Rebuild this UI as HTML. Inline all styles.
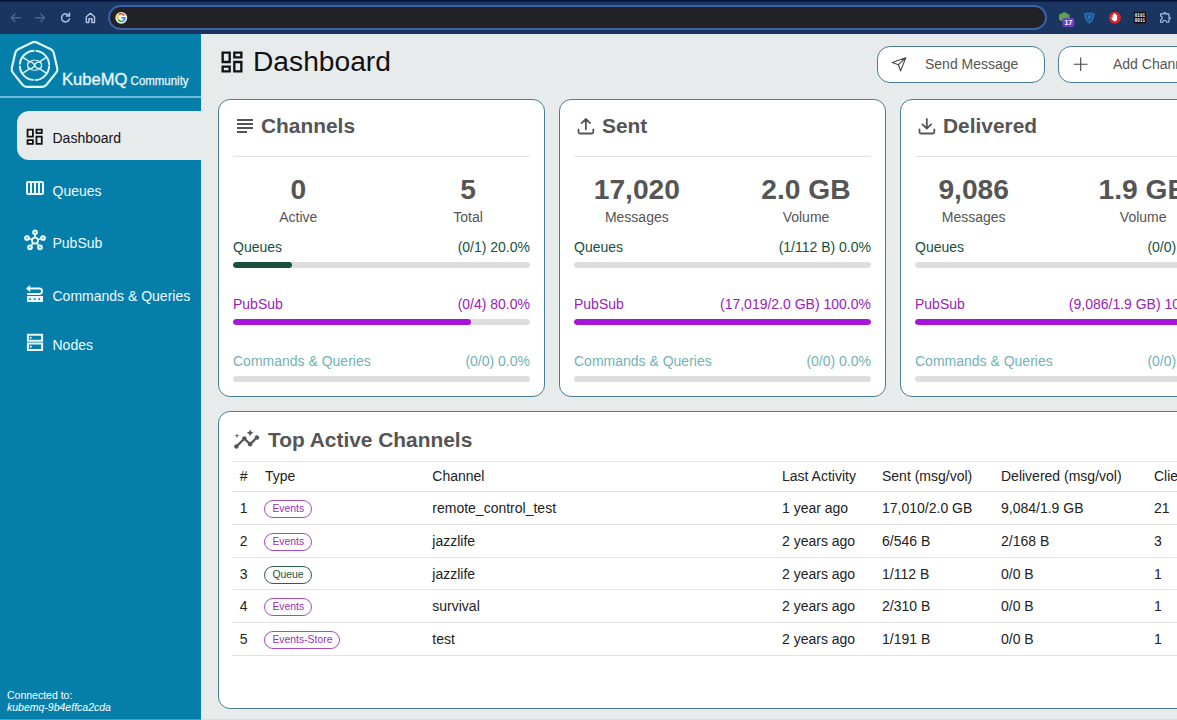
<!DOCTYPE html>
<html lang="en">
<head>
<meta charset="utf-8">
<title>KubeMQ Dashboard</title>
<style>
*{box-sizing:border-box;margin:0;padding:0}
html,body{width:1177px;height:720px;overflow:hidden;background:#e8ebec;font-family:"Liberation Sans",Arial,sans-serif;color:#222}
.abs{position:absolute}
svg{position:absolute;overflow:visible}
#chrome{position:absolute;left:0;top:0;width:1177px;height:34px;background:#1a3560}
#chrome .topline{position:absolute;left:0;top:0;width:1177px;height:3px;background:linear-gradient(#04143a 0,#04143a 1px,#1a3560 2.400px)}
#url{position:absolute;left:108px;top:5px;width:939px;height:25px;border-radius:13px;background:#202226;border:2px solid #3b61a8}
#side{position:absolute;left:0;top:34px;width:201px;height:686px;background:#057faa}
#side .sep{position:absolute;left:0;top:62px;width:201px;height:2px;background:#6bbad6}
.nav{position:absolute;left:17px;width:184px;height:49px;color:#eefaff;font-size:14px}
.nav span{position:absolute;left:35.500px;top:18px;line-height:18px;white-space:nowrap}
.nav.act{background:#e8ebec;border-radius:12px 0 0 12px;color:#111}
#main{position:absolute;left:201px;top:34px;width:976px;height:686px;background:#e8ebec;overflow:hidden}
.card{position:absolute;background:#fff;border:1px solid #4b7d92;border-radius:12px}
.ctitle{position:absolute;left:42px;top:13px;font-size:20.9px;font-weight:bold;color:#555;line-height:26px;white-space:nowrap}
.hr{position:absolute;left:14px;width:297px;top:56px;height:1px;background:#e2e2e2}
.big{position:absolute;width:160px;text-align:center;top:72px;font-size:28.2px;font-weight:bold;color:#555;line-height:34px;white-space:nowrap}
.sub{position:absolute;width:160px;text-align:center;top:108px;font-size:14px;color:#555;line-height:18px}
.row{position:absolute;left:14px;width:297px;height:18px;font-size:14px;line-height:18px;white-space:nowrap}
.row b{font-weight:normal;position:absolute;right:0;top:0}
.bar{position:absolute;left:14px;width:297px;height:6px;border-radius:3px;background:#dddddd;overflow:hidden}
.bar i{position:absolute;left:0;top:0;height:6px;border-radius:3px}
.q{color:#17513d}.p{color:#9a22b5}.c{color:#72b2b6}
.btn{position:absolute;top:11.600px;height:37.900px;border:1px solid #4b7d92;border-radius:13px;background:#fff;color:#555;font-size:14px}
.btn span{position:absolute;top:8px;line-height:18px;white-space:nowrap}
.trow{position:absolute;left:13px;width:1000px;height:33px;border-top:1px solid #e2e2e2;font-size:14px;color:#222}
.trow span{position:absolute;top:7px;line-height:18px;white-space:nowrap}
.pill{position:absolute;top:8px;height:18px;border-radius:9px;border:1px solid #a64cc0;color:#9632b0;font-size:10.400px;line-height:16px;padding:0 7px;white-space:nowrap}
.pill.g{border-color:#2d5f4e;color:#1b5440}
</style>
</head>
<body>
<div id="chrome"><div class="topline"></div><div id="url"></div>
<svg width="1177" height="34" viewBox="0 0 1177 34" style="left:0;top:0">
  <g fill="none" stroke="#4d6592" stroke-width="1.4" stroke-linecap="round" stroke-linejoin="round">
    <path d="M20.500 17.800H11.200M15 14l-3.800 3.800 3.800 3.800"/>
    <path d="M35.300 17.800h9.300M40.800 14l3.800 3.800-3.800 3.800"/>
  </g>
  <g fill="none" stroke="#aebfe2" stroke-width="1.5" stroke-linecap="round" stroke-linejoin="round">
    <path d="M69 15.800a4 4 0 1 0 .4 3.200"/>
    <path d="M69.500 13v3.100h-3.100" />
    <path d="M86.3 22.4v-5.6l4.1-3.6 4.1 3.6v5.6h-2.6v-3.6h-3v3.6z"/>
  </g>
  <circle cx="121.3" cy="17.8" r="5.9" fill="#fff"/>
  <g fill="none" stroke-width="1.7">
    <path d="M124.4 15.6a3.6 3.6 0 0 0-5.6-1" stroke="#ea4335"/>
    <path d="M118.8 14.6a3.6 3.6 0 0 0-.6 4.9" stroke="#fbbc05"/>
    <path d="M118.2 19.5a3.6 3.6 0 0 0 5.3 1.2" stroke="#34a853"/>
    <path d="M123.5 20.7a3.6 3.6 0 0 0 1.4-2.9h-3.4" stroke="#4285f4"/>
  </g>
  <path d="M1064.3 11.9l5.3 2.8v5l-5.3 2.6-5.3-2.6v-5z" fill="#5fa052"/>
  <rect x="1062.400" y="17.700" width="12" height="9.200" rx="3.200" fill="#6a3fc2"/>
  <text x="1068.400" y="24.900" font-size="7" font-weight="bold" fill="#fff" text-anchor="middle" font-family="Liberation Sans, sans-serif">17</text>
  <path d="M1084 13.400q5.300-2 10.700 0q-.4 7-5.350 10.400q-4.950-3.400-5.350-10.400z" fill="#2570b6"/><path d="M1085.800 14.600q3.500-1.200 7.100 0q-.4 4.800-3.550 7.300q-3.150-2.500-3.550-7.300z" fill="#1d4f88"/>
  <path d="M1087.500 15.400h3.700l-1.850 5.400z" fill="#2b7cc4"/>
  <circle cx="1114.9" cy="17.8" r="6" fill="#e0242b"/>
  <path d="M1112.6 17.2v-2.4q.6-.6 1.1 0v-1.2q.6-.6 1.2 0v.5q.6-.5 1.1 0v1q.6-.4 1.1 0v3.6q0 2.6-2.3 2.6q-1.6 0-2.5-1.6l-1.2-2.2q.6-.8 1.5.3z" fill="#fff"/>
  <rect x="1133.9" y="11.9" width="12" height="11.4" fill="#0b0b0b"/>
  <text x="1139.9" y="17.1" font-size="4.6" font-weight="bold" fill="#fff" text-anchor="middle" font-family="Liberation Mono, monospace" textLength="10.4" lengthAdjust="spacingAndGlyphs">0101</text>
  <text x="1139.9" y="22.1" font-size="4.6" font-weight="bold" fill="#fff" text-anchor="middle" font-family="Liberation Mono, monospace" textLength="10.4" lengthAdjust="spacingAndGlyphs">0011</text>
  <g transform="translate(1158.900 10.500) scale(0.558)"><path fill="#a9c6f3" d="M10.500 4.500c.28 0 .5.220.5.500v2h6v6h2c.28 0 .5.220.5.500s-.22.500-.5.500h-2v6h-2.120c-.68-1.750-2.390-3-4.380-3s-3.700 1.250-4.380 3H4v-2.120c1.750-.68 3-2.390 3-4.380 0-1.990-1.240-3.700-2.990-4.380L4 7h6V5c0-.28.220-.5.500-.5m0-2C9.120 2.500 8 3.620 8 5H4c-1.100 0-1.990.9-1.990 2v3.800h.29c1.490 0 2.700 1.210 2.700 2.700s-1.210 2.700-2.700 2.700H2V20c0 1.100.9 2 2 2h3.800v-.3c0-1.490 1.210-2.700 2.700-2.700s2.700 1.210 2.700 2.700v.3H17c1.100 0 2-.9 2-2v-4c1.380 0 2.500-1.120 2.500-2.500S20.380 11 19 11V7c0-1.100-.9-2-2-2h-4c0-1.380-1.120-2.500-2.500-2.500z"/></g>
</svg>
</div>

<div id="side">
  <svg width="201" height="64" viewBox="0 34 201 64" style="left:0;top:0">
    <g fill="none" stroke="#dff6fd" stroke-linejoin="round" stroke-linecap="round">
      <path d="M32.16 42.53Q34.50 41.40 36.84 42.53L50.84 49.27Q53.19 50.40 53.76 52.93L57.22 68.08Q57.80 70.62 56.18 72.65L46.49 84.80Q44.87 86.83 42.27 86.83L26.73 86.83Q24.13 86.83 22.51 84.80L12.82 72.65Q11.20 70.62 11.78 68.08L15.24 52.93Q15.81 50.40 18.16 49.27Z" stroke-width="2.200"/>
      <circle cx="34.5" cy="65.4" r="14.7" stroke-width="2" stroke-dasharray="21.89 1.2" stroke-dashoffset="-0.6" stroke-linecap="butt"/>
      <path d="M23.6 57.800l5.800 3.800M45.600 57.800l-5.800 3.800M23.600 72.600l5.800-3.800M45.600 72.600l-5.800-3.800" stroke-width="1.400"/>
      <path d="M34.600 65.200c-2-4.600-7-4.400-7 0s5 4.600 7 0c2-4.600 7-4.400 7 0s-5 4.600-7 0z" stroke-width="1.300"/>
      <path d="M29.600 61.400c3.200-1.800 6.800-1.800 10 0M29.600 69c3.200 1.800 6.800 1.800 10 0" stroke-width="1"/>
    </g>
    <text x="62" y="85.200" font-size="16.900" fill="#e8f8fd" stroke="#e8f8fd" stroke-width="0.350" font-family="Liberation Sans, sans-serif" textLength="65.5" lengthAdjust="spacingAndGlyphs">KubeMQ</text>
    <text x="130.600" y="85.200" font-size="12.600" fill="#e8f8fd" stroke="#e8f8fd" stroke-width="0.250" font-family="Liberation Sans, sans-serif" textLength="58" lengthAdjust="spacingAndGlyphs">Community</text>
  </svg>
  <div class="sep"></div>
  <div class="nav act" style="top:77.400px"><span>Dashboard</span>
    <svg width="21.33" height="21.33" viewBox="0 0 24 24" style="left:7.3px;top:14.3px"><path fill="#111" d="M19 5v2h-4V5h4M9 5v6H5V5h4m10 8v6h-4v-6h4M9 17v2H5v-2h4M21 3h-8v6h8V3zM11 3H3v10h8V3zm10 8h-8v10h8V11zm-10 4H3v6h8v-6z"/></svg>
  </div>
  <div class="nav" style="top:130px"><span>Queues</span>
    <svg width="18" height="14" viewBox="0 0 18 14" style="left:9px;top:17px"><path fill="#eefaff" fill-rule="evenodd" d="M2 0h14a2 2 0 0 1 2 2v10a2 2 0 0 1-2 2H2a2 2 0 0 1-2-2V2a2 2 0 0 1 2-2zM2 2v10h2V2zM6 2v10h2V2zM10 2v10h2V2zM14 2v10h2V2z"/></svg>
  </div>
  <div class="nav" style="top:182px"><span>PubSub</span>
    <svg width="24" height="24" viewBox="0 0 24 24" style="left:6px;top:12px">
      <g fill="none" stroke="#eefaff">
        <path d="M12 12.600V4.300M12 12.600L4 10M12 12.600L20 10M12 12.600L7 19.300M12 12.600L17 19.300" stroke-width="1.6"/>
        <circle cx="12" cy="12.600" r="3" stroke-width="1.8" fill="#057faa"/>
        <circle cx="12" cy="4.300" r="1.800" stroke-width="2.1" fill="#057faa"/>
        <circle cx="4" cy="10" r="1.800" stroke-width="2.1" fill="#057faa"/>
        <circle cx="20" cy="10" r="1.800" stroke-width="2.1" fill="#057faa"/>
        <circle cx="7" cy="19.300" r="1.800" stroke-width="2.1" fill="#057faa"/>
        <circle cx="17" cy="19.300" r="1.800" stroke-width="2.1" fill="#057faa"/>
      </g>
    </svg>
  </div>
  <div class="nav" style="top:235px"><span>Commands &amp; Queries</span>
    <svg width="20" height="20" viewBox="0 0 20 20" style="left:8px;top:15px">
      <path d="M2 4.500h12.300a2.750 2.750 0 0 1 0 5.500H2.200" fill="none" stroke="#eefaff" stroke-width="1.900"/>
      <path d="M1 4.500L5.200 0.900V8.100z" fill="#eefaff"/>
      <path fill="#eefaff" fill-rule="evenodd" d="M2 12.100h16v6H2zM4.200 14.300v1.700h1.700v-1.700zM8.800 14.300v1.700h1.700v-1.700zM13.400 14.300v1.700h1.700v-1.700z"/>
    </svg>
  </div>
  <div class="nav" style="top:284px"><span>Nodes</span>
    <svg width="40" height="49" viewBox="0 0 40 49" style="left:0;top:0"><path fill="#eefaff" fill-rule="evenodd" d="M10.400 15.800h15.200a.5.500 0 0 1 .5.500v6.950a.5.500 0 0 1-.5.500H10.400a.5.500 0 0 1-.5-.5V16.300a.5.500 0 0 1 .5-.5zM11.900 17.800v3.950h12.200V17.800zM10.400 24.400h15.200a.5.500 0 0 1 .5.500v7.500a.5.500 0 0 1-.5.500H10.400a.5.500 0 0 1-.5-.5v-7.500a.5.500 0 0 1 .5-.5zM11.900 26.400v4.500h12.200v-4.500z"/><circle cx="13.700" cy="19.800" r="1.050" fill="#eefaff"/><circle cx="13.700" cy="28.650" r="1.050" fill="#eefaff"/></svg>
  </div>
  <div class="abs" style="left:7px;top:655px;color:#fff;font-size:10.500px;line-height:12px;white-space:nowrap">Connected to:<br><i>kubemq-9b4effca2cda</i></div>
</div>

<div id="main">
  <svg width="28" height="28" viewBox="0 0 24 24" style="left:16.700px;top:13.500px"><path fill="#111" d="M19 5v2h-4V5h4M9 5v6H5V5h4m10 8v6h-4v-6h4M9 17v2H5v-2h4M21 3h-8v6h8V3zM11 3H3v10h8V3zm10 8h-8v10h8V11zm-10 4H3v6h8v-6z"/></svg>
  <div class="abs" style="left:52px;top:9.400px;font-size:28.200px;line-height:36px;color:#111;white-space:nowrap">Dashboard</div>
  <div class="btn" style="left:676px;width:168px"><span style="left:47px">Send Message</span>
    <svg width="20" height="20" viewBox="0 0 20 20" style="left:11px;top:8.300px"><path d="M16.800 2.700L3.200 7.600l6.300 2.100zM16.800 2.700L11.600 15.900 9.500 9.700z" fill="none" stroke="#444" stroke-width="1.1" stroke-linejoin="round"/></svg>
  </div>
  <div class="btn" style="left:857px;width:169px"><span style="left:54px">Add Channel</span>
    <svg width="20" height="20" viewBox="0 0 20 20" style="left:11.800px;top:7.500px"><path d="M2.800 10.200h13.800M9.700 3.500v13.400" fill="none" stroke="#444" stroke-width="1.1"/></svg>
  </div>

  <div class="card" style="left:17px;top:65px;width:327px;height:298px">
    <svg width="24" height="24" viewBox="0 0 24 24" style="left:13.900px;top:13.600px"><path fill="#555" d="M14 17H4v2h10v-2zm6-8H4v2h16V9zM4 15h16v-2H4v2zM4 5v2h16V5H4z"/></svg>
    <div class="ctitle">Channels</div><div class="hr"></div>
    <div class="big" style="left:-0.700px">0</div><div class="sub" style="left:-0.700px">Active</div>
    <div class="big" style="left:169.100px">5</div><div class="sub" style="left:169.100px">Total</div>
    <div class="row q" style="top:138px">Queues<b>(0/1) 20.0%</b></div><div class="bar" style="top:162px"><i style="width:20%;background:#17513d"></i></div>
    <div class="row p" style="top:195px">PubSub<b>(0/4) 80.0%</b></div><div class="bar" style="top:219px"><i style="width:80%;background:#a616d8"></i></div>
    <div class="row c" style="top:252px">Commands &amp; Queries<b>(0/0) 0.0%</b></div><div class="bar" style="top:276px"></div>
  </div>

  <div class="card" style="left:358px;top:65px;width:327px;height:298px">
    <svg width="24" height="24" viewBox="0 0 24 24" style="left:12.200px;top:11.500px"><path d="M6.500 17.500v2.500a1.500 1.500 0 0 0 1.500 1.500h11.800a1.500 1.500 0 0 0 1.500-1.500v-2.500M13.900 17.300V6.900M9.700 11.100l4.200-4.200 4.200 4.200" fill="none" stroke="#555" stroke-width="1.8" stroke-linecap="round" stroke-linejoin="round"/></svg>
    <div class="ctitle">Sent</div><div class="hr"></div>
    <div class="big" style="left:-3.200px">17,020</div><div class="sub" style="left:-3.200px">Messages</div>
    <div class="big" style="left:166px">2.0 GB</div><div class="sub" style="left:166px">Volume</div>
    <div class="row q" style="top:138px">Queues<b>(1/112 B) 0.0%</b></div><div class="bar" style="top:162px"></div>
    <div class="row p" style="top:195px">PubSub<b>(17,019/2.0 GB) 100.0%</b></div><div class="bar" style="top:219px"><i style="width:100%;background:#a616d8"></i></div>
    <div class="row c" style="top:252px">Commands &amp; Queries<b>(0/0) 0.0%</b></div><div class="bar" style="top:276px"></div>
  </div>

  <div class="card" style="left:699px;top:65px;width:327px;height:298px">
    <svg width="24" height="24" viewBox="0 0 24 24" style="left:12.200px;top:11.500px"><path d="M6.500 17.500v2.500a1.500 1.500 0 0 0 1.500 1.500h11.800a1.500 1.500 0 0 0 1.500-1.500v-2.500M13.800 6.900V16.600M9.500 12.400l4.300 4.300 4.300-4.300" fill="none" stroke="#555" stroke-width="1.8" stroke-linecap="round" stroke-linejoin="round"/></svg>
    <div class="ctitle">Delivered</div><div class="hr"></div>
    <div class="big" style="left:-7.300px">9,086</div><div class="sub" style="left:-7.300px">Messages</div>
    <div class="big" style="left:162.200px">1.9 GB</div><div class="sub" style="left:162.200px">Volume</div>
    <div class="row q" style="top:138px">Queues<b>(0/0) 0.0%</b></div><div class="bar" style="top:162px"></div>
    <div class="row p" style="top:195px">PubSub<b>(9,086/1.9 GB) 100.0%</b></div><div class="bar" style="top:219px"><i style="width:100%;background:#a616d8"></i></div>
    <div class="row c" style="top:252px">Commands &amp; Queries<b>(0/0) 0.0%</b></div><div class="bar" style="top:276px"></div>
  </div>

  <div class="card" style="left:17px;top:377px;width:1010px;height:298px">
    <svg width="27.400" height="27.400" viewBox="0 0 24 24" style="left:13.700px;top:14.200px"><path fill="#555" d="M21 8c-1.450 0-2.260 1.440-1.930 2.510l-3.550 3.560c-.3-.09-.74-.09-1.040 0l-2.550-2.550C12.270 10.450 11.460 9 10 9c-1.450 0-2.270 1.440-1.930 2.520l-4.560 4.550C2.440 15.740 1 16.550 1 18c0 1.100.9 2 2 2 1.450 0 2.260-1.440 1.930-2.510l4.550-4.560c.3.090.74.090 1.040 0l2.550 2.550C12.730 16.550 13.540 18 15 18c1.450 0 2.270-1.440 1.930-2.520l3.560-3.550c1.070.33 2.510-.48 2.510-1.930 0-1.100-.9-2-2-2zM15 9l.94-2.070L18 6l-2.060-.93L15 3l-.92 2.070L12 6l2.080.93zM3.500 11L4 9l2-.5L4 8l-.5-2L3 8l-2 .5L3 9z"/></svg>
    <div class="ctitle" style="left:49px;top:15px">Top Active Channels</div>
    <div class="trow" style="top:49px;height:30px"><span style="left:7.700px;top:5px">#</span><span style="left:33px;top:5px">Type</span><span style="left:200.300px;top:5px">Channel</span><span style="left:550px;top:5px">Last Activity</span><span style="left:650px;top:5px">Sent (msg/vol)</span><span style="left:769px;top:5px">Delivered (msg/vol)</span><span style="left:922px;top:5px">Clients</span></div>
    <div class="trow" style="top:79px"><span style="left:7.700px">1</span><div class="pill" style="left:32.400px">Events</div><span style="left:200.300px">remote_control_test</span><span style="left:550px">1 year ago</span><span style="left:650px">17,010/2.0 GB</span><span style="left:769px">9,084/1.9 GB</span><span style="left:922px">21</span></div>
    <div class="trow" style="top:112px"><span style="left:7.700px">2</span><div class="pill" style="left:32.400px">Events</div><span style="left:200.300px">jazzlife</span><span style="left:550px">2 years ago</span><span style="left:650px">6/546 B</span><span style="left:769px">2/168 B</span><span style="left:922px">3</span></div>
    <div class="trow" style="top:145px"><span style="left:7.700px">3</span><div class="pill g" style="left:32.400px">Queue</div><span style="left:200.300px">jazzlife</span><span style="left:550px">2 years ago</span><span style="left:650px">1/112 B</span><span style="left:769px">0/0 B</span><span style="left:922px">1</span></div>
    <div class="trow" style="top:177px"><span style="left:7.700px">4</span><div class="pill" style="left:32.400px">Events</div><span style="left:200.300px">survival</span><span style="left:550px">2 years ago</span><span style="left:650px">2/310 B</span><span style="left:769px">0/0 B</span><span style="left:922px">1</span></div>
    <div class="trow" style="top:210px"><span style="left:7.700px">5</span><div class="pill" style="left:32.400px">Events-Store</div><span style="left:200.300px">test</span><span style="left:550px">2 years ago</span><span style="left:650px">1/191 B</span><span style="left:769px">0/0 B</span><span style="left:922px">1</span></div>
    <div class="trow" style="top:243px;height:1px"></div>
  </div>
</div>
<div class="abs" style="left:0;top:719px;width:201px;height:1px;background:#4a9dbd"></div><div class="abs" style="left:201px;top:719px;width:976px;height:1px;background:#dcdfe0"></div>
</body>
</html>
